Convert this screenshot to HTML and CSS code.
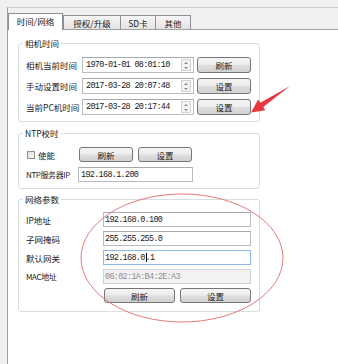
FILE: index.html
```html
<!DOCTYPE html>
<html lang="zh-CN">
<head>
<meta charset="utf-8">
<title>时间/网络</title>
<link rel="stylesheet" href="styles.css">
</head>
<body>
<div class="app">
  <div class="frame">
    <div class="tabs">
      <div class="tab active">时间/网络</div>
      <div class="tab t2">授权/升级</div>
      <div class="tab t3">SD卡</div>
      <div class="tab t4">其他</div>
    </div>
    <div class="panel">
      <fieldset class="group g-time">
        <legend>相机时间</legend>
        <div class="rows">
          <div class="row">
            <span class="label">相机当前时间</span>
            <div class="field spin"><span class="val">1970-01-01 08:01:10</span><span class="spinner"><i class="up"></i><i class="down"></i></span></div>
            <button class="btn">刷新</button>
          </div>
          <div class="row">
            <span class="label">手动设置时间</span>
            <div class="field spin"><span class="val">2017-03-28 20:07:48</span><span class="spinner"><i class="up"></i><i class="down"></i></span></div>
            <button class="btn">设置</button>
          </div>
          <div class="row">
            <span class="label">当前PC机时间</span>
            <div class="field spin"><span class="val">2017-03-28 20:17:44</span><span class="spinner"><i class="up"></i><i class="down"></i></span></div>
            <button class="btn">设置</button>
          </div>
        </div>
      </fieldset>

      <fieldset class="group g-ntp">
        <legend>NTP校时</legend>
        <div class="rows">
          <div class="row">
            <label class="chk"><span class="box"></span><span>使能</span></label>
            <button class="btn">刷新</button>
            <button class="btn">设置</button>
          </div>
          <div class="row">
            <span class="label narrow">NTP服务器IP</span>
            <div class="field"><span class="val">192.168.1.200</span></div>
          </div>
        </div>
      </fieldset>

      <fieldset class="group g-net">
        <legend>网络参数</legend>
        <div class="rows">
          <div class="row">
            <span class="label">IP地址</span>
            <div class="field"><span class="val">192.168.0.100</span></div>
          </div>
          <div class="row">
            <span class="label">子网掩码</span>
            <div class="field"><span class="val">255.255.255.0</span></div>
          </div>
          <div class="row">
            <span class="label">默认网关</span>
            <div class="field focus"><span class="val">192.168.0<span class="caret"></span>.1</span></div>
          </div>
          <div class="row">
            <span class="label narrow">MAC地址</span>
            <div class="field disabled"><span class="val">06:02:1A:B4:2E:A3</span></div>
          </div>
          <div class="row actions">
            <button class="btn">刷新</button>
            <button class="btn">设置</button>
          </div>
        </div>
      </fieldset>
    </div>
  </div>
  <svg class="annot" width="338" height="364" viewBox="0 0 338 364" aria-hidden="true">
    <ellipse cx="182" cy="258" rx="101" ry="64" fill="none" stroke="#e27a7a" stroke-width="1"/>
    <polygon points="290,86 263.2,106.9 265.4,110.3 251,112.5 258.2,99.5 260.4,102.7" fill="#e8363c"/>
  </svg>
</div>
</body>
</html>
```
FILE: styles.css
```css
* { box-sizing: border-box; }
html, body { margin: 0; padding: 0; }
body {
  width: 338px;
  height: 364px;
  overflow: hidden;
  background: #f0f0f0;
  font-family: "Noto Sans CJK SC", "Noto Sans", sans-serif;
  font-size: 8.5px;
  color: #1a1a1a;
}
.app {
  position: relative;
  height: 364px;
  padding: 7px 0 0 7px;
  background: #f0f0f0;
}
.frame {
  height: 100%;
  border-top: 1px solid #cfcfcf;
  border-left: 1px solid #a0a0a0;
  display: flex;
  flex-direction: column;
}
.tabs {
  height: 21px;
  display: flex;
  align-items: flex-end;
  flex: none;
}
.tab {
  height: 14px;
  border: 1px solid #8d9096;
  border-bottom: none;
  background: linear-gradient(#f6f6f6, #e4e4e4);
  display: flex;
  align-items: center;
  justify-content: center;
  line-height: 12px;
}
.tab.active {
  position: relative;
  z-index: 1;
  height: 17px;
  width: 55px;
  margin-bottom: -1px;
  background: #fff;
  padding-bottom: 2px;
}
.t2 { width: 58px; }
.t3 { width: 36px; margin-left: -1px; }
.t4 { width: 36px; margin-left: -1px; }
.panel {
  flex: 1;
  background: #fff;
  border-top: 1px solid #a0a0a0;
  padding: 7px 0 0 10px;
}
.group {
  width: 242px;
  margin: 0;
  border: 1px solid #d8dde0;
  border-radius: 3px;
  padding: 8px 8px 6px 7px;
  min-inline-size: 0;
}
.group legend {
  font-size: 8.5px;
  line-height: 12px;
  padding: 0 2px;
  margin-left: -3px;
}
.g-ntp { margin-top: 5px; }
.g-net { margin-top: 4px; padding-top: 7px; padding-bottom: 8px; }
.rows {
  display: flex;
  flex-direction: column;
  gap: 5px;
}
.g-net .rows { gap: 4px; }
.row {
  display: flex;
  align-items: center;
  height: 15px;
}
.g-time .row { height: 16px; }
.label {
  flex: none;
  white-space: nowrap;
  line-height: 12px;
}
.label.narrow { letter-spacing: -0.4px; font-size: 8px; }
.g-time .label { width: 56px; }
.g-ntp .label { width: 52px; }
.g-net .label { width: 77px; }
.field {
  height: 15px;
  border: 1px solid #b9bcc2;
  border-top-color: #a6a9af;
  background: #fff;
  display: flex;
  align-items: center;
  justify-content: space-between;
  padding: 0 2px 0 3px;
  flex: none;
}
.g-time .field { width: 112px; height: 16px; }
.g-ntp .field { width: 115px; padding-left: 2px; }
.g-net .field { width: 148px; padding-left: 1px; }
.field.focus { border-color: #8fbbe6; }
.field.disabled { background: #f2f2f2; border-color: #d2d2d2; color: #8d8d8d; }
.val {
  font-family: "Liberation Mono", "DejaVu Sans Mono", monospace;
  font-size: 8.5px;
  letter-spacing: -0.7px;
  white-space: nowrap;
  display: flex;
  align-items: center;
}
.caret {
  display: inline-block;
  width: 1px;
  height: 9px;
  background: #000;
  margin: 0 -1px 0 1px;
}
.spinner {
  width: 10px;
  height: 12px;
  border: 1px solid #d3d3d3;
  background: #f3f3f3;
  display: flex;
  flex-direction: column;
  align-items: center;
  justify-content: space-around;
}
.spinner i {
  display: block;
  width: 0;
  height: 0;
  border-left: 2px solid transparent;
  border-right: 2px solid transparent;
}
.spinner .up { border-bottom: 2px solid #8a8a8a; }
.spinner .down { border-top: 2px solid #8a8a8a; }
.btn {
  flex: none;
  width: 54px;
  height: 15px;
  padding: 0;
  border: 1px solid #767676;
  border-radius: 3px;
  background: linear-gradient(#f5f5f5 0%, #ececec 48%, #dedede 52%, #d2d2d2 100%);
  font-family: "Noto Sans CJK SC", sans-serif;
  font-size: 8.5px;
  line-height: 12px;
  color: #1a1a1a;
  display: flex;
  align-items: center;
  justify-content: center;
}
.g-time .btn { margin-left: 3px; height: 16px; }
.g-ntp .btn + .btn { margin-left: 5px; }
.chk {
  width: 53px;
  display: flex;
  align-items: center;
  flex: none;
}
.chk .box {
  width: 8px;
  height: 8px;
  margin: 0 3px 0 1px;
  border: 1px solid #8f8f8f;
  background: linear-gradient(135deg, #dcdcdc, #fafafa);
}
.actions { padding-left: 78px; }
.actions .btn { width: 71px; }
.actions .btn + .btn { margin-left: 5px; }
.annot {
  position: absolute;
  left: 0;
  top: 0;
  pointer-events: none;
}
```
